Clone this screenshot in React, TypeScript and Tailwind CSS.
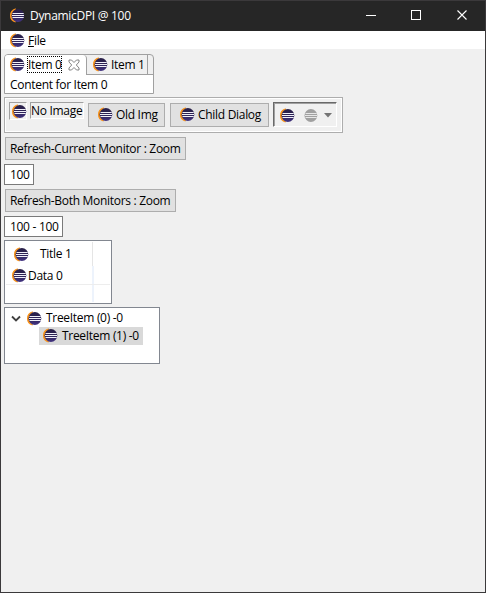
import type { ReactNode } from 'react';

function Eclipse({ gray = false }: { gray?: boolean }) {
  return (
    <svg width="16" height="16" viewBox="0 0 16 16" className="block shrink-0">
      <defs>
        <linearGradient id="eclipse-body" x1="0" y1="0" x2="0" y2="1">
          <stop offset="0" stopColor="#2a2148" />
          <stop offset=".5" stopColor="#2c2255" />
          <stop offset="1" stopColor="#443582" />
        </linearGradient>
      </defs>
      {!gray && <path d="M6.6 1.1A6.6 6.6 0 0 0 6.6 13.9A7.2 7.2 0 0 1 6.6 1.1Z" fill="#f7941e" stroke="#f7941e" strokeWidth="1.3" />}
      <circle cx="8.9" cy="7.5" r="6.4" fill={gray ? '#a0a0a0' : 'url(#eclipse-body)'} />
      <path d="M3.5 5h11.2v1H3.5zM3 7h12v1H3zM3.5 9h11.2v1H3.5z" fill={gray ? '#e6e6e6' : '#f0f0f8'} />
    </svg>
  );
}

function Label({ children, className = '' }: { children: ReactNode; className?: string }) {
  return <span className={`block shrink-0 whitespace-pre leading-4 ${className}`}>{children}</span>;
}

function Button({ children, className = '' }: { children: ReactNode; className?: string }) {
  return (
    <div className={`flex shrink-0 items-center border border-[#adadad] bg-[#e1e1e1] ${className}`}>{children}</div>
  );
}

export default function App() {
  return (
    <div className="flex h-[593px] w-[486px] flex-col overflow-hidden border border-[#3b393b] bg-[#f0f0f0] font-['Open_Sans','Noto_Sans',sans-serif] text-[12px] tracking-[-0.3px] text-black">
      <header className="flex h-[30px] shrink-0 bg-[#262626] text-white">
        <div className="flex pl-2 pt-[7px]">
          <Eclipse />
          <Label className="ml-[5px]">DynamicDPI @ 100</Label>
        </div>
        <div className="-mr-px ml-auto flex">
          <svg width="46" height="30" className="block" shapeRendering="crispEdges"><path d="M18 14.5h10" stroke="white" /></svg>
          <svg width="46" height="30" className="block" shapeRendering="crispEdges"><rect x="17.5" y="9.5" width="9" height="9" fill="none" stroke="white" /></svg>
          <svg width="46" height="30" className="block"><path d="M17.5 9.5l9 9m0-9l-9 9" stroke="white" strokeWidth="1.1" /></svg>
        </div>
      </header>
      <nav className="flex h-[18px] shrink-0 bg-white pl-2 pt-[2px]">
        <Eclipse />
        <Label className="ml-[3px]"><u>F</u>ile</Label>
      </nav>
      <main className="flex flex-col items-start pl-[3px] pt-[5px]">
        <section className="flex h-10 w-[150px] flex-col overflow-hidden rounded-t-[4px] border border-[#a0a0a0]">
          <div className="flex h-5 shrink-0">
            <div className="flex h-5 w-[82px] shrink-0 rounded-tr-[4px] border-r border-[#a0a0a0] bg-white pl-1 pt-[2px]">
              <Eclipse />
              <Label className="ml-[2px] -mt-px h-[17px] w-[35px] border border-dotted border-black leading-4">Item 0</Label>
              <svg width="12" height="12" viewBox="0 0 12 12" className="ml-[6px] mt-[2px] block"><path d="M1 1h2.5L6 3.5 8.5 1H11v2L8.3 6 11 9v2H8.5L6 8.5 3.5 11H1V9L3.7 6 1 3Z" fill="white" stroke="#777" strokeWidth=".9" /></svg>
            </div>
            <div className="flex w-[61px] shrink-0 border-b border-r border-[#a0a0a0] pl-[5px] pt-[2px]">
              <Eclipse />
              <Label className="ml-[3px]">Item 1</Label>
            </div>
            <div className="flex-1 border-b border-[#a0a0a0]" />
          </div>
          <div className="flex-1 bg-white pl-[5px] pt-[2px]"><Label>Content for Item 0</Label></div>
        </section>

        <section className="mt-[3px] flex h-9 w-[339px] items-start border border-[#adadad] pl-1 pt-1 shadow-[inset_1px_1px_0_white,inset_-1px_-1px_0_white]">
          <div className="h-[18px] w-[18px] shrink-0 border border-b-white border-l-[#a0a0a0] border-r-white border-t-[#a0a0a0] pl-px pt-px"><Eclipse /></div>
          <div className="ml-[3px] h-[17px] w-[54px] shrink-0 border border-b-white border-l-[#a0a0a0] border-r-white border-t-[#a0a0a0]"><Label>No Image</Label></div>
          <Button className="ml-1 mt-px h-6 w-[77px] pl-2"><Eclipse /><Label className="ml-[3px]">Old Img</Label></Button>
          <Button className="ml-[5px] mt-px h-6 w-[99px] pl-2"><Eclipse /><Label className="ml-[3px]">Child Dialog</Label></Button>
          <div className="ml-1 flex h-[25px] w-[64px] shrink-0 border border-b-white border-l-[#696969] border-r-white border-t-[#696969] pl-[5px] pt-[5px] shadow-[inset_1px_1px_0_#a0a0a0]">
            <Eclipse />
            <div className="ml-[7px]"><Eclipse gray /></div>
            <svg width="8" height="5" className="ml-[6px] mt-[5px] block"><path d="M0 0h8L4 4.5Z" fill="#747474" /></svg>
          </div>
        </section>

        <Button className="ml-px mt-1 h-[23px] w-[181px] pl-1"><Label>Refresh-Current Monitor : Zoom</Label></Button>
        <div className="mt-1 flex h-[21px] w-[30px] items-center border border-[#7a7a7a] bg-white pl-[5px]"><Label>100</Label></div>
        <Button className="ml-px mt-1 h-[23px] w-[171px] pl-1"><Label>Refresh-Both Monitors : Zoom</Label></Button>
        <div className="mt-1 flex h-[21px] w-[59px] items-center border border-[#7a7a7a] bg-white pl-[5px]"><Label>100 - 100</Label></div>

        <section className="mt-[3px] flex h-16 w-[108px] flex-col border border-[#828790] bg-white px-px pt-px">
          <div className="flex h-6 w-[87px] border-r border-[#e5e5e5] pl-[7px] pt-[5px]">
            <Eclipse />
            <Label className="-mt-px ml-[11px]">Title 1</Label>
          </div>
          <div className="flex h-[19px] border-b border-[#ededed]">
            <div className="flex w-[88px] border-r-2 border-[#edf3fc] pl-[5px] pt-[2px]">
              <Eclipse /><Label className="ml-px">Data 0</Label>
            </div>
          </div>
          <div className="h-[17px] w-[88px] border-r-2 border-[#edf3fc]" />
        </section>

        <section className="mt-[3px] h-[57px] w-[156px] border border-[#828790] bg-white pt-px">
          <div className="flex h-[18px] pl-[6px] pt-px">
            <svg width="10" height="8" viewBox="0 0 10 8" className="mt-[5px] block"><path d="M1 1.5L5 5.5 9 1.5" fill="none" stroke="#404040" strokeWidth="1.8" /></svg>
            <div className="ml-[5px] mt-px"><Eclipse /></div>
            <Label className="ml-1">TreeItem (0) -0</Label>
          </div>
          <div className="ml-[34px] flex h-[18px] w-[104px] bg-[#d9d9d9] pl-[3px] pt-px">
            <Eclipse /><Label className="ml-1">TreeItem (1) -0</Label>
          </div>
        </section>
      </main>
    </div>
  );
}
